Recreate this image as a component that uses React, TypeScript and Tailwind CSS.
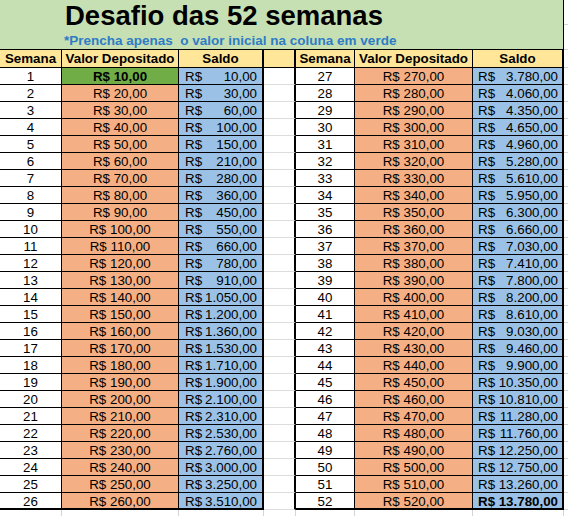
import React from "react";

const fmt = (v: number) => {
  const int = Math.floor(v);
  const s = int.toString().replace(/\B(?=(\d{3})+(?!\d))/g, ".");
  return s + ",00";
};

type RowProps = { n: number; last: boolean };

function Semana({ n, w, last }: { n: number; w: string; last: boolean }) {
  return (
    <div
      className={`${w} shrink-0 bg-white border-r border-black ${last ? "border-b-2" : "border-b"} flex justify-center pt-[2px] leading-[14px]`}
    >
      {n}
    </div>
  );
}

function Valor({ n, w, last }: { n: number; w: string; last: boolean }) {
  const first = n === 1;
  return (
    <div
      className={`${w} shrink-0 ${first ? "bg-[#70ad47] font-bold" : "bg-[#f4b084]"} border-r border-black ${last ? "border-b-2" : "border-b"} flex justify-center pt-[2px] leading-[14px]`}
    >
      R$ {fmt(n * 10)}
    </div>
  );
}

function Saldo({ n, w, last, pad }: { n: number; w: string; last: boolean; pad: string }) {
  const bold = n === 52;
  return (
    <div
      className={`${w} shrink-0 bg-[#9bc2e6] border-r-2 border-black ${last ? "border-b-2" : "border-b"} flex justify-between gap-[3px] ${pad} pt-[2px] leading-[14px] ${bold ? "font-bold" : ""}`}
    >
      <span>R$</span>
      <span>{fmt(5 * n * (n + 1))}</span>
    </div>
  );
}

function Row({ n, last }: RowProps) {
  const m = n + 26;
  return (
    <div className="flex h-[17px]">
      <Semana n={n} w="w-[62px]" last={last} />
      <Valor n={n} w="w-[117px]" last={last} />
      <Saldo n={n} w="w-[85px]" last={last} pad="pl-[6px] pr-[5px]" />
      <div className="w-[32px] shrink-0 bg-white border-r-2 border-r-black border-b border-b-[#dcdcdc]" />
      <Semana n={m} w="w-[59px]" last={last} />
      <Valor n={m} w="w-[118px]" last={last} />
      <Saldo n={m} w="w-[91px]" last={last} pad="pl-[5px] pr-[4px]" />
      <div className="w-[4px] shrink-0 border-b border-[#d4d4d4]" />
    </div>
  );
}

export default function App() {
  const rows = Array.from({ length: 26 }, (_, i) => i + 1);
  return (
    <div className="w-[568px] h-[516px] overflow-hidden bg-white text-black text-[13.33px] font-['Liberation_Sans',Arial,sans-serif]">
      <div className="flex">
        <div className="w-[564px] h-[50px] shrink-0 bg-[#c6e0b4] border-b border-r border-black">
          <div className="pl-[65px] pt-[2px] text-[27.5px] leading-[28px] font-bold">
            Desafio das 52 semanas
          </div>
          <div className="pl-[64px] mt-[3px] text-[13.5px] leading-[15px] font-bold text-[#2e7cc4] whitespace-pre">
            {"*Prencha apenas  o valor inicial na coluna em verde"}
          </div>
        </div>
        <div className="w-[4px] shrink-0 flex flex-col">
          <div className="h-[25px] border-b border-[#d4d4d4]" />
          <div className="h-[25px] border-b border-[#d4d4d4]" />
        </div>
      </div>
      <div className="flex h-[18px] font-bold">
        <div className="w-[62px] shrink-0 bg-[#ffe699] border-r border-b border-black flex justify-center pt-[2px] leading-[14px]">
          Semana
        </div>
        <div className="w-[117px] shrink-0 bg-[#ffe699] border-r border-b border-black flex justify-center pt-[2px] leading-[14px]">
          Valor Depositado
        </div>
        <div className="w-[85px] shrink-0 bg-[#ffe699] border-r-2 border-b border-black flex justify-center pt-[2px] leading-[14px]">
          Saldo
        </div>
        <div className="w-[32px] shrink-0 bg-[#ffe699] border-r-2 border-b border-black" />
        <div className="w-[59px] shrink-0 bg-[#ffe699] border-r border-b border-black flex justify-center pt-[2px] leading-[14px]">
          Semana
        </div>
        <div className="w-[118px] shrink-0 bg-[#ffe699] border-r border-b border-black flex justify-center pt-[2px] leading-[14px]">
          Valor Depositado
        </div>
        <div className="w-[91px] shrink-0 bg-[#ffe699] border-r-2 border-b border-black flex justify-center pt-[2px] leading-[14px]">
          Saldo
        </div>
        <div className="w-[4px] shrink-0 border-b border-[#d4d4d4]" />
      </div>
      {rows.map((n) => (
        <Row key={n} n={n} last={n === 26} />
      ))}
      <div className="flex h-[8px]">
        <div className="w-[62px] shrink-0 border-r border-[#d4d4d4]" />
        <div className="w-[117px] shrink-0 border-r border-[#d4d4d4]" />
        <div className="w-[85px] shrink-0 border-r border-[#d4d4d4]" />
        <div className="w-[32px] shrink-0 border-r border-[#d4d4d4]" />
        <div className="w-[59px] shrink-0 border-r border-[#d4d4d4]" />
        <div className="w-[118px] shrink-0 border-r border-[#d4d4d4]" />
        <div className="w-[91px] shrink-0 border-r border-[#d4d4d4]" />
      </div>
    </div>
  );
}
